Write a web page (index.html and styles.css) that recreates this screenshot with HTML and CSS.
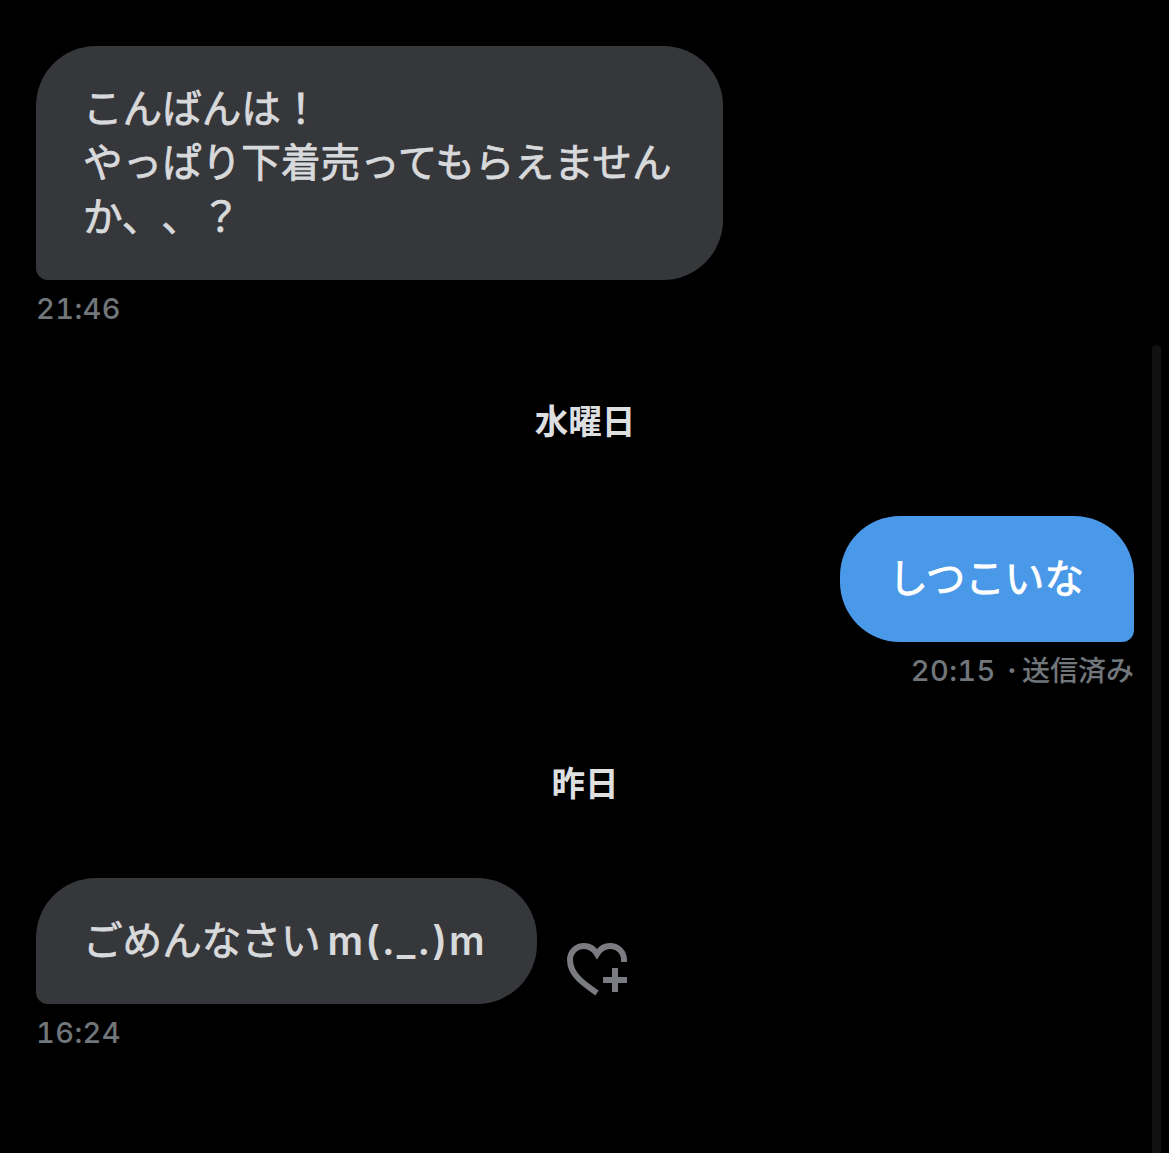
FILE: index.html
```html
<!DOCTYPE html>
<html>
  <head>
    <meta charset="utf-8" />
    <title>メッセージ</title>
    <link rel="stylesheet" href="styles.css">
  </head>
  <body>
    <div class="scrollbar"></div>
    <div class="thread">
      <div class="msg">
        <div class="bubble in">こんばんは！<br />やっぱり下着売ってもらえません<br />か、、？</div>
        <div class="meta">21:46</div>
      </div>

      <div class="day">水曜日</div>

      <div class="msg out">
        <div class="bubble sent">しつこいな</div>
        <div class="meta">20:15 <span class="dot">·</span><span class="status">送信済み</span></div>
      </div>

      <div class="day">昨日</div>

      <div class="msg">
        <div class="row">
          <div class="bubble in">ごめんなさい<span class="latin">m(._.)m</span></div>
          <svg class="react" width="64" height="56" viewBox="0 0 64 56" fill="none" stroke="#7b7c81" stroke-width="6">
            <path d="M32 52 C25 47 19 43 14 38 C8 32 5 26 5 19 C5 11 11 5 19 5 C24 5 29 8 32 13 C35 8 40 5 45 5 C53 5 59 11 59 19 L59 21" />
            <path d="M50 27 V51 M38 39 H62" />
          </svg>
        </div>
        <div class="meta">16:24</div>
      </div>
    </div>
  </body>
</html>
```
FILE: styles.css
```css
* {
  box-sizing: border-box;
  margin: 0;
  padding: 0;
}
html,
body {
  height: 100%;
  background: #000;
  overflow: hidden;
}
body {
  font-family: Inter, "Noto Sans CJK JP", sans-serif;
  position: relative;
}
.scrollbar {
  position: absolute;
  top: 345px;
  bottom: 0;
  left: 1152px;
  width: 9px;
  border-radius: 5px 5px 0 0;
  background: #111;
}
.thread {
  padding: 46px 35px 0 36px;
  display: flex;
  flex-direction: column;
}
.msg {
  display: flex;
  flex-direction: column;
  align-items: flex-start;
}
.msg.out {
  align-items: flex-end;
}
.row {
  display: flex;
  align-items: flex-start;
}
.bubble {
  padding: 36px 51px 36px 47px;
  font-size: 39.6px;
  line-height: 54px;
  white-space: nowrap;
  text-spacing-trim: space-all;
  -webkit-text-stroke: 0.8px currentColor;
  border-radius: 60px;
}
.bubble.in {
  background: #36373b;
  color: #d8d9db;
  border-bottom-left-radius: 12px;
}
.bubble.sent {
  padding-left: 48px;
  padding-right: 50px;
  background: #4a99e9;
  color: #fff;
  border-bottom-right-radius: 12px;
}
.latin {
  margin-left: 7px;
  margin-right: -1px;
  font-weight: 600;
  letter-spacing: 2.1px;
  -webkit-text-stroke: 0;
}
.meta {
  margin-top: 11px;
  font-size: 29px;
  font-weight: 500;
  font-variant-numeric: tabular-nums;
  letter-spacing: 0.4px;
  line-height: 36px;
  color: #71767b;
}
.dot {
  margin-left: 3px;
  margin-right: 5px;
  font-weight: 700;
}
.status {
  font-size: 28px;
  letter-spacing: 0;
}
.day {
  margin: 73px 0 72px;
  text-align: center;
  font-size: 33.6px;
  font-weight: 700;
  line-height: 44px;
  color: #dedfe0;
}
.react {
  margin: 63px 0 0 28px;
}
```
